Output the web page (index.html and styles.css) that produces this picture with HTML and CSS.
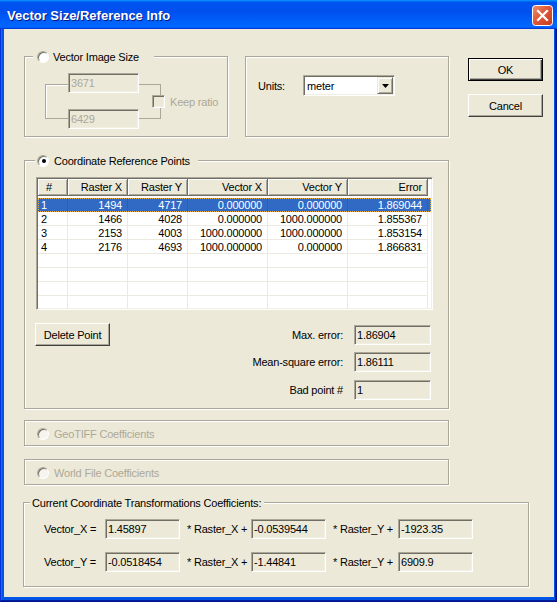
FILE: index.html
```html
<!DOCTYPE html>
<html>
<head>
<meta charset="utf-8">
<title>Vector Size/Reference Info</title>
<link rel="stylesheet" href="styles.css">
</head>
<body>
<div class="window">
  <div class="titlebar">
    <span class="title">Vector Size/Reference Info</span>
    <div class="close">
      <svg width="21" height="21" viewBox="0 0 21 21">
        <defs>
          <linearGradient id="cg" x1="0" y1="0" x2="1" y2="1">
            <stop offset="0" stop-color="#F0906E"/>
            <stop offset="0.45" stop-color="#E0583A"/>
            <stop offset="1" stop-color="#C23A1C"/>
          </linearGradient>
        </defs>
        <rect x="0.5" y="0.5" width="20" height="20" rx="3" ry="3" fill="url(#cg)" stroke="#FFFFFF" stroke-width="1"/>
        <path d="M6 6 L15 15 M15 6 L6 15" stroke="#FFFFFF" stroke-width="2.2" stroke-linecap="square"/>
      </svg>
    </div>
  </div>
  <div class="client">
    <div class="top-row">
      <div class="group g-size">
        <div class="legend lg-size"><span class="radio"></span><span>Vector Image Size</span></div>
        <div class="size-block">
          <div class="br-left"></div>
          <div class="size-edits">
            <div class="edit w71 dis">3671</div>
            <div class="edit w71 dis">6429</div>
          </div>
          <div class="br-right">
            <div class="check-row"><span class="check"></span><span class="dis-text">Keep ratio</span></div>
          </div>
        </div>
      </div>
      <div class="group g-units">
        <div class="units-row">
          <span class="units-label">Units:</span>
          <div class="combo">
            <span class="combo-text">meter</span>
            <span class="drop"><svg width="7" height="4" viewBox="0 0 7 4"><polygon points="0,0 7,0 3.5,4" fill="#000"/></svg></span>
          </div>
        </div>
      </div>
      <div class="buttons">
        <button class="btn default">OK</button>
        <button class="btn">Cancel</button>
      </div>
    </div>

    <div class="group g-coord">
      <div class="legend lg-coord"><span class="radio"><span class="dot"></span></span><span>Coordinate Reference Points</span></div>
      <div class="list">
        <div class="lv-head">
          <div class="hc hl">#</div>
          <div class="hc">Raster X</div>
          <div class="hc">Raster Y</div>
          <div class="hc">Vector X</div>
          <div class="hc">Vector Y</div>
          <div class="hc">Error</div>
        </div>
        <div class="lv-body">
          <div class="lv-row sel"><div class="c cl">1</div><div class="c">1494</div><div class="c">4717</div><div class="c">0.000000</div><div class="c">0.000000</div><div class="c">1.869044</div></div>
          <div class="lv-row"><div class="c cl">2</div><div class="c">1466</div><div class="c">4028</div><div class="c">0.000000</div><div class="c">1000.000000</div><div class="c">1.855367</div></div>
          <div class="lv-row"><div class="c cl">3</div><div class="c">2153</div><div class="c">4003</div><div class="c">1000.000000</div><div class="c">1000.000000</div><div class="c">1.853154</div></div>
          <div class="lv-row"><div class="c cl">4</div><div class="c">2176</div><div class="c">4693</div><div class="c">1000.000000</div><div class="c">0.000000</div><div class="c">1.866831</div></div>
          <div class="lv-row"><div class="c"></div><div class="c"></div><div class="c"></div><div class="c"></div><div class="c"></div><div class="c"></div></div>
          <div class="lv-row"><div class="c"></div><div class="c"></div><div class="c"></div><div class="c"></div><div class="c"></div><div class="c"></div></div>
          <div class="lv-row"><div class="c"></div><div class="c"></div><div class="c"></div><div class="c"></div><div class="c"></div><div class="c"></div></div>
          <div class="lv-row"><div class="c"></div><div class="c"></div><div class="c"></div><div class="c"></div><div class="c"></div><div class="c"></div></div>
        </div>
      </div>
      <div class="coord-bottom">
        <button class="btn">Delete Point</button>
        <div class="stats">
          <div class="stat"><span>Max. error:</span><div class="edit w77">1.86904</div></div>
          <div class="stat"><span>Mean-square error:</span><div class="edit w77">1.86111</div></div>
          <div class="stat"><span>Bad point #</span><div class="edit w77">1</div></div>
        </div>
      </div>
    </div>

    <div class="group g-opt g-geo">
      <span class="radio dis-radio"></span><span class="dis-text">GeoTIFF Coefficients</span>
    </div>
    <div class="group g-opt g-world">
      <span class="radio dis-radio"></span><span class="dis-text">World File Coefficients</span>
    </div>

    <div class="group g-coef">
      <div class="legend lg-coef"><span>Current Coordinate Transformations Coefficients:</span></div>
      <div class="coef-grid">
        <span>Vector_X =</span>
        <div class="edit w75">1.45897</div>
        <span class="op">* Raster_X +</span>
        <div class="edit w75">-0.0539544</div>
        <span class="op">* Raster_Y +</span>
        <div class="edit w75">-1923.35</div>

        <span>Vector_Y =</span>
        <div class="edit w75">-0.0518454</div>
        <span class="op">* Raster_X +</span>
        <div class="edit w75">-1.44841</div>
        <span class="op">* Raster_Y +</span>
        <div class="edit w75">6909.9</div>
      </div>
    </div>
  </div>
</div>
</body>
</html>
```

FILE: styles.css
```css
html, body {
  margin: 0;
  padding: 0;
  background: #ffffff;
}
body {
  font-family: "Liberation Sans", Arial, sans-serif;
  font-size: 11px;
  letter-spacing: -0.2px;
  color: #000;
}
.window {
  width: 557px;
  height: 602px;
  box-sizing: border-box;
  display: flex;
  flex-direction: column;
  background: #0055E5;
  box-shadow: inset -1px -1px #00138c, inset 1px 1px #0831d9, inset -2px -2px #001ea0, inset 2px 2px #166aee;
}
.titlebar {
  height: 29px;
  flex: none;
  display: flex;
  align-items: flex-start;
  justify-content: space-between;
  padding: 0 4px 0 7px;
  background: linear-gradient(180deg, #0997ff, #0053ee 8%, #0050ee 40%, #0066ff 88%, #0066ff 93%, #005bff 95%, #003dd7 96%, #003dd7);
}
.title {
  margin-top: 8px;
  line-height: 15px;
  font-size: 13px;
  font-weight: bold;
  letter-spacing: 0;
  color: #ffffff;
  text-shadow: 1px 1px 0 #0a1883;
}
.close {
  margin-top: 5px;
  width: 21px;
  height: 21px;
}
.close svg { display: block; }

.client {
  flex: 1;
  margin: 0 3px 5px 4px;
  background: #ECE9D8;
  padding: 27px 0 0 20px;
  display: flex;
  flex-direction: column;
  align-items: flex-start;
}

.group {
  box-sizing: border-box;
  border: 1px solid #ACA899;
  box-shadow: 1px 1px 0 #ffffff, inset 1px 1px 0 #ffffff;
}
.legend {
  display: flex;
  align-items: center;
  height: 13px;
  margin-top: -7px;
  width: max-content;
  background: #ECE9D8;
  white-space: nowrap;
}
.lg-size { margin-left: 8px; padding: 0 15px 0 4px; gap: 4px; }
.lg-coord { margin-left: 10px; padding: 0 8px 0 2px; gap: 5px; }
.lg-coef { margin-left: 6px; padding: 0 3px 0 2px; }

.radio {
  box-sizing: border-box;
  width: 12px;
  height: 12px;
  flex: none;
  border-radius: 50%;
  border: 1px solid;
  border-color: #ACA899 #ffffff #ffffff #ACA899;
  box-shadow: inset 1px 1px 0 #716F64;
  background: #ffffff;
  display: flex;
  align-items: center;
  justify-content: center;
}
.radio .dot {
  width: 4px;
  height: 4px;
  border-radius: 50%;
  background: #000;
  margin: 1px 0 0 1px;
}
.dis-radio { background: #F5F4EE; }

.check {
  box-sizing: border-box;
  width: 13px;
  height: 13px;
  flex: none;
  border: 1px solid;
  border-color: #ACA899 #ffffff #ffffff #ACA899;
  box-shadow: inset 1px 1px 0 #716F64, inset -1px -1px 0 #F1EFE2;
  background: #ECE9D8;
}
.dis-text { color: #ACA899; }

.top-row {
  display: flex;
  align-items: flex-start;
}
.g-size { width: 204px; height: 81px; }
.g-units { width: 204px; height: 81px; margin-left: 17px; }
.buttons {
  margin-left: 19px;
  margin-top: 2px;
  display: flex;
  flex-direction: column;
  gap: 13px;
}

.btn {
  box-sizing: border-box;
  width: 75px;
  height: 23px;
  padding: 0;
  margin: 0;
  font-family: inherit;
  font-size: 11px;
  letter-spacing: -0.2px;
  color: #000;
  background: #ECE9D8;
  border: 1px solid;
  border-color: #ffffff #404040 #404040 #ffffff;
  box-shadow: inset -1px -1px 0 #ACA899;
}
.btn.default {
  border-color: #000000;
  box-shadow: inset 1px 1px 0 #ffffff, inset -1px -1px 0 #404040, inset -2px -2px 0 #ACA899;
}

.edit {
  box-sizing: border-box;
  height: 20px;
  border: 1px solid;
  border-color: #ACA899 #ffffff #ffffff #ACA899;
  box-shadow: inset 1px 1px 0 #716F64, inset -1px -1px 0 #F1EFE2;
  background: #ECE9D8;
  padding: 0 2px;
  display: flex;
  align-items: center;
  white-space: nowrap;
}
.edit.dis { color: #ACA899; }
.w71 { width: 71px; }
.w75 { width: 75px; }
.w77 { width: 77px; }

.size-block {
  display: flex;
  align-items: flex-start;
  margin: 10px 0 0 20px;
}
.br-left {
  box-sizing: border-box;
  width: 23px;
  height: 35px;
  margin-top: 11px;
  border: 1px solid #ACA899;
  border-right: none;
  box-shadow: inset 1px 1px 0 #ffffff;
}
.size-edits {
  display: flex;
  flex-direction: column;
  gap: 16px;
}
.br-right {
  box-sizing: border-box;
  width: 22px;
  height: 35px;
  margin-top: 11px;
  border: 1px solid #ACA899;
  border-left: none;
  display: flex;
  align-items: center;
  padding-left: 13px;
}
.check-row {
  display: flex;
  align-items: center;
  gap: 5px;
  white-space: nowrap;
  flex: none;
}

.units-row {
  display: flex;
  align-items: center;
  margin: 18px 0 0 12px;
}
.units-label { width: 45px; }
.combo {
  box-sizing: border-box;
  width: 92px;
  height: 21px;
  border: 1px solid;
  border-color: #ACA899 #ffffff #ffffff #ACA899;
  box-shadow: inset 1px 1px 0 #716F64, inset -1px -1px 0 #F1EFE2;
  background: #ffffff;
  display: flex;
  align-items: stretch;
  justify-content: space-between;
  padding: 1px 1px 1px 1px;
}
.combo-text {
  display: flex;
  align-items: center;
  padding-left: 2px;
}
.drop {
  box-sizing: border-box;
  width: 16px;
  display: flex;
  align-items: center;
  justify-content: center;
  background: #ECE9D8;
  border: 1px solid;
  border-color: #ECE9D8 #716F64 #716F64 #ECE9D8;
  box-shadow: inset 1px 1px 0 #ffffff, inset -1px -1px 0 #ACA899;
}
.drop svg { display: block; }

.g-coord {
  width: 425px;
  height: 249px;
  margin-top: 23px;
}
.list {
  box-sizing: border-box;
  width: 397px;
  height: 133px;
  margin: 10px 0 0 11px;
  border: 1px solid;
  border-color: #ACA899 #ffffff #ffffff #ACA899;
  box-shadow: inset 1px 1px 0 #716F64, inset -1px -1px 0 #F1EFE2;
  background: #ffffff;
  padding: 1px;
  overflow: hidden;
}
.lv-head, .lv-row {
  display: grid;
  grid-template-columns: 30px 60px 60px 80px 80px 80px;
}
.hc {
  box-sizing: border-box;
  height: 17px;
  background: #ECE9D8;
  border-right: 1px solid #716F64;
  border-bottom: 1px solid #716F64;
  box-shadow: inset 1px 1px 0 #ffffff, inset -1px -1px 0 #ACA899;
  display: flex;
  align-items: center;
  justify-content: flex-end;
  padding-right: 5px;
}
.hc.hl { justify-content: flex-start; padding-left: 8px; }
.lv-body { margin-top: 2px; }
.lv-row { height: 14px; }
.c {
  box-sizing: border-box;
  height: 14px;
  border-right: 1px solid #ECEADF;
  border-bottom: 1px solid #ECEADF;
  display: flex;
  align-items: center;
  justify-content: flex-end;
  padding-right: 5px;
  white-space: nowrap;
}
.c.cl { justify-content: flex-start; padding-left: 3px; }
.lv-row.sel {
  background: #316AC5;
  color: #ffffff;
  outline: 1px dotted #F0B040;
  outline-offset: -1px;
}
.lv-row.sel .c { border-color: #2B5FB4; }

.coord-bottom {
  width: 396px;
  display: flex;
  justify-content: space-between;
  align-items: flex-start;
  margin: 13px 0 0 10px;
}
.stats {
  margin-top: 2px;
  display: flex;
  flex-direction: column;
  gap: 7px;
}
.stat {
  display: flex;
  align-items: center;
  justify-content: flex-end;
  gap: 11px;
}
.stat:last-child { margin-top: 1px; }

.g-opt {
  width: 425px;
  height: 26px;
  display: flex;
  align-items: center;
  gap: 5px;
  padding-left: 12px;
}
.g-geo { margin-top: 11px; padding-top: 2px; }
.g-world { margin-top: 13px; padding-top: 1px; }

.g-coef {
  width: 506px;
  height: 85px;
  margin-top: 17px;
  margin-left: -1px;
}
.coef-grid {
  display: grid;
  grid-template-columns: 61px 75px 71px 75px 72px 75px;
  row-gap: 13px;
  align-items: center;
  margin: 10px 0 0 20px;
}
.coef-grid .op { padding-left: 7px; white-space: nowrap; }
```
